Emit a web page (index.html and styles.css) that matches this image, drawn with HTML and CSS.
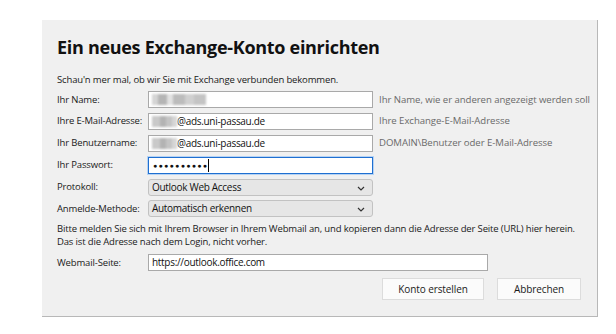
FILE: index.html
```html
<!DOCTYPE html>
<html lang="de">
<head>
<meta charset="utf-8">
<title>Exchange-Konto</title>
<link rel="stylesheet" href="styles.css">
</head>
<body>
<div class="panel">
  <h1 class="title">Ein neues Exchange-Konto einrichten</h1>
  <p class="intro">Schau'n mer mal, ob wir Sie mit Exchange verbunden bekommen.</p>
  <div class="form">
    <label class="label">Ihr Name:</label>
    <div class="field"><span class="blur long" aria-hidden="true"></span></div>
    <span class="hint">Ihr Name, wie er anderen angezeigt werden soll</span>

    <label class="label">Ihre E-Mail-Adresse:</label>
    <div class="field"><span class="blur" aria-hidden="true"></span>@ads.uni-passau.de</div>
    <span class="hint">Ihre Exchange-E-Mail-Adresse</span>

    <label class="label">Ihr Benutzername:</label>
    <div class="field"><span class="blur" aria-hidden="true"></span>@ads.uni-passau.de</div>
    <span class="hint">DOMAIN\Benutzer oder E-Mail-Adresse</span>

    <label class="label">Ihr Passwort:</label>
    <div class="field focus"><span class="dots">●●●●●●●●●●</span><span class="caret"></span></div>
    <span class="hint"></span>

    <label class="label">Protokoll:</label>
    <div class="field select">Outlook Web Access<svg class="chev" viewBox="0 0 8 5" width="8" height="5"><path d="M1 1 L4 4 L7 1" fill="none" stroke="#333" stroke-width="1.2"/></svg></div>
    <span class="hint"></span>

    <label class="label">Anmelde-Methode:</label>
    <div class="field select">Automatisch erkennen<svg class="chev" viewBox="0 0 8 5" width="8" height="5"><path d="M1 1 L4 4 L7 1" fill="none" stroke="#333" stroke-width="1.2"/></svg></div>
    <span class="hint"></span>
  </div>
  <p class="note">Bitte melden Sie sich mit Ihrem Browser in Ihrem Webmail an, und kopieren dann die Adresse der Seite (URL) hier herein.<br>Das ist die Adresse nach dem Login, nicht vorher.</p>
  <div class="webmail">
    <label class="label">Webmail-Seite:</label>
    <div class="field wide">https://outlook.office.com</div>
  </div>
  <div class="buttons">
    <button class="btn create">Konto erstellen</button>
    <button class="btn cancel">Abbrechen</button>
  </div>
</div>
</body>
</html>
```

FILE: styles.css
```css
html, body {
  margin: 0;
  padding: 0;
  background: #ffffff;
}
body {
  font-family: "Open Sans", "Noto Sans", sans-serif;
  color: #1a1a1a;
}
.panel {
  box-sizing: border-box;
  margin: 20px 0 0 42px;
  width: 556px;
  height: 297px;
  background: #f0f0f0;
  border-right: 1px solid #b8b8b8;
  border-bottom: 1px solid #b8b8b8;
  padding: 0 0 0 15px;
  display: flex;
  flex-direction: column;
}
.title {
  margin: 14px 0 0 0;
  font-size: 18px;
  font-weight: 700;
  line-height: 26px;
  color: #111;
  letter-spacing: -0.3px;
}
.intro {
  margin: 13px 0 0 0;
  font-size: 9.5px;
  letter-spacing: -0.15px;
  line-height: 14px;
}
.form {
  margin-top: 4px;
  display: grid;
  grid-template-columns: 91px 225px auto;
  grid-auto-rows: 17px;
  row-gap: 4.9px;
  align-items: center;
}
.label {
  font-size: 9.5px;
  letter-spacing: -0.15px;
  line-height: 14px;
  white-space: nowrap;
}
.field {
  box-sizing: border-box;
  height: 17px;
  background: #fff;
  border: 1px solid #a9a9a9;
  font-size: 10px;
  letter-spacing: -0.3px;
  line-height: 15px;
  padding: 0 3px;
  display: flex;
  align-items: center;
  white-space: nowrap;
  color: #111;
}
.blur {
  display: inline-block;
  width: 25px;
  height: 11px;
  background: linear-gradient(90deg, #c9c9c9 0 30%, #b3b3b3 30% 55%, #c4c4c4 55% 80%, #d6d6d6 80%);
  filter: blur(0.8px);
}
.blur.long {
  width: 54px;
  background: linear-gradient(90deg, #d5d5d5 0 12%, #b5b5b5 12% 28%, #e2e2e2 28% 38%, #bcbcbc 38% 62%, #d0d0d0 62% 78%, #c4c4c4 78%);
}
.focus {
  border: 1px solid #1f6fd0;
  box-shadow: 0 0 0 1px #b6d3f4;
}
.dots {
  font-size: 7px;
  letter-spacing: 1.3px;
  padding-left: 1px;
}
.caret {
  width: 1px;
  height: 13px;
  background: #000;
}
.select {
  position: relative;
  background: #e6e6e6;
  border-color: #c2c2c2;
  border-radius: 3px;
}
.chev {
  position: absolute;
  right: 7px;
  top: 6px;
}
.hint {
  margin-left: 6px;
  font-size: 9.6px;
  letter-spacing: -0.05px;
  line-height: 14px;
  color: #6a6a6a;
  white-space: nowrap;
}
.note {
  margin: 5px 0 0 0;
  font-size: 9.5px;
  letter-spacing: -0.15px;
  line-height: 13px;
}
.webmail {
  margin-top: 6px;
  display: grid;
  grid-template-columns: 91px 340px;
  align-items: center;
}
.buttons {
  margin-top: 7px;
  display: flex;
  gap: 13px;
  padding-left: 325px;
}
.btn {
  height: 22px;
  background: #fbfbfb;
  border: 1px solid #dcdcdc;
  font-family: "Open Sans", "Noto Sans", sans-serif;
  font-size: 10px;
  letter-spacing: -0.1px;
  color: #1a1a1a;
  padding: 0;
}
.create { width: 102px; }
.cancel { width: 84px; }
```
